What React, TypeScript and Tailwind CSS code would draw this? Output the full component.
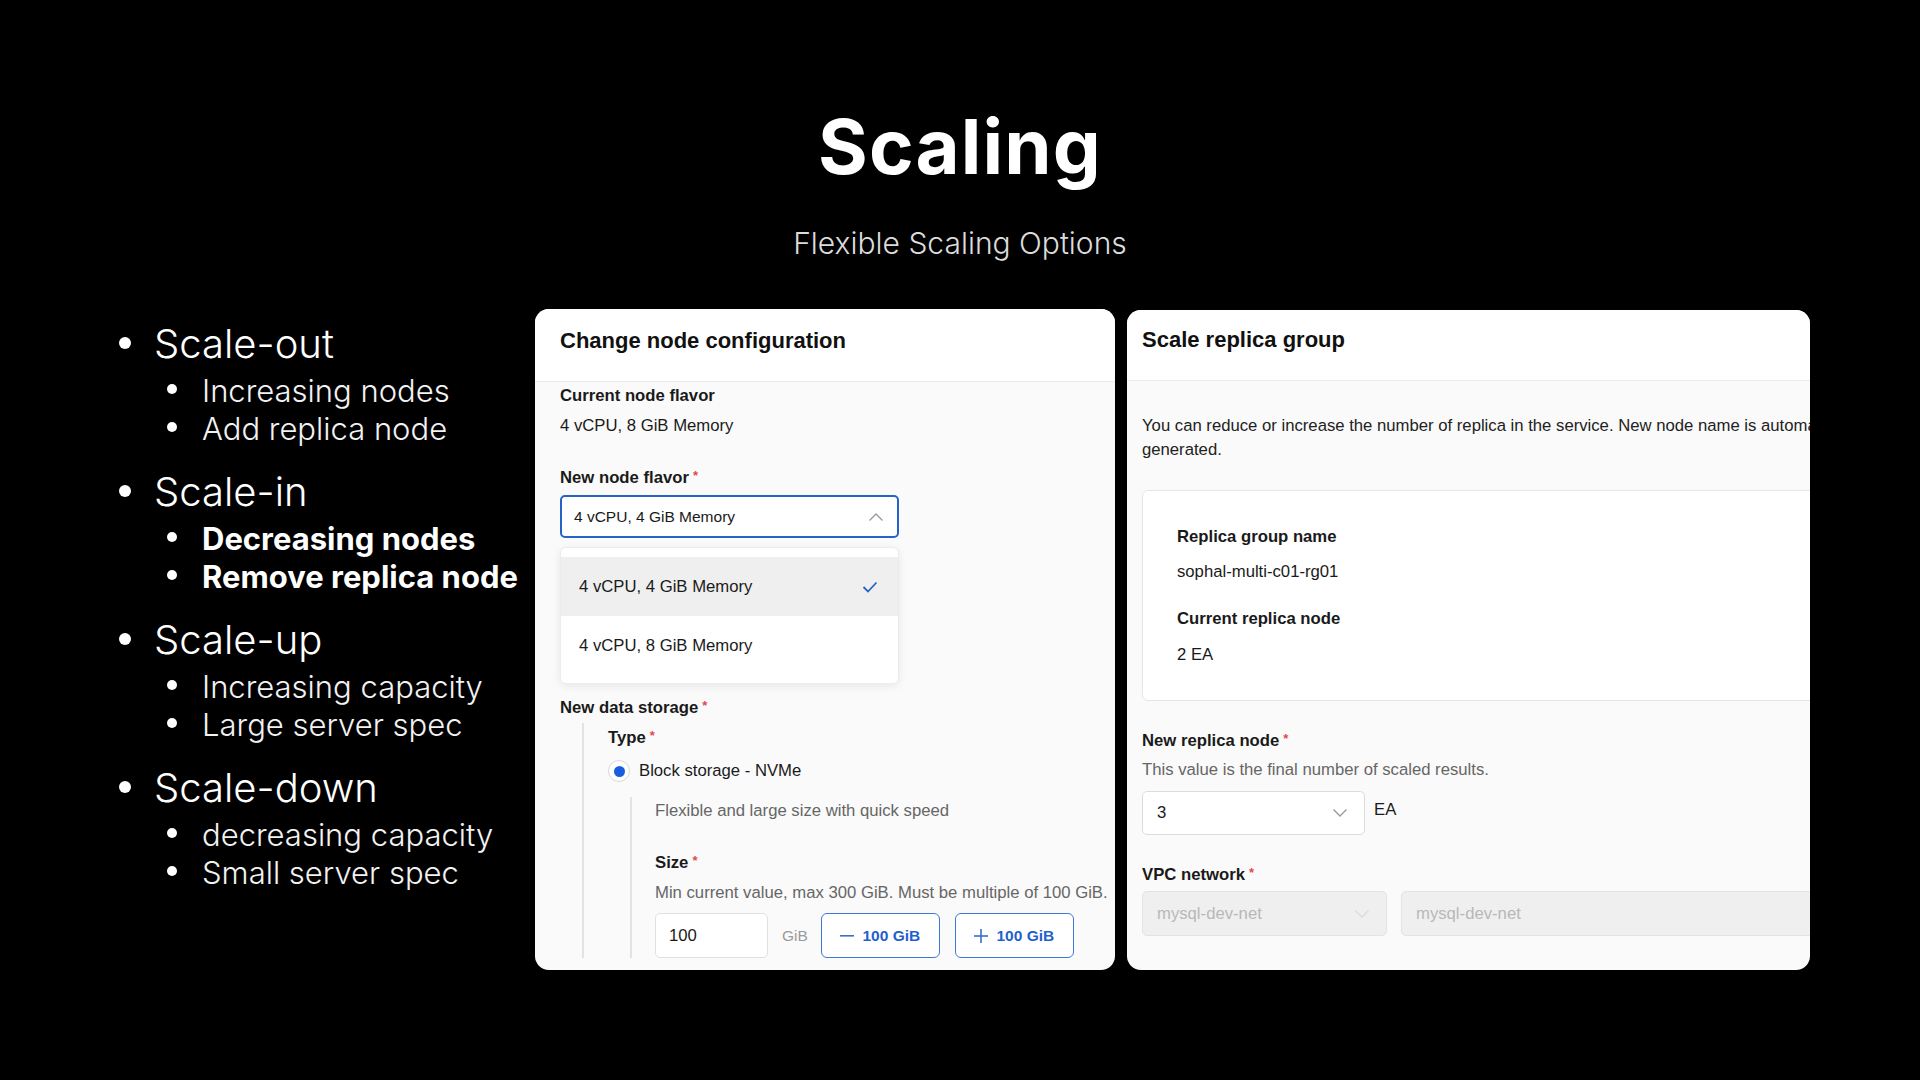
import React from "react";

const Star = () => (
  <span className="text-[#e5484d] text-[13px] leading-none align-top relative top-[1px] ml-[4px]">*</span>
);

const ChevronUp = () => (
  <svg width="16" height="10" viewBox="0 0 16 10" fill="none">
    <polyline points="1.5,8.5 8,2 14.5,8.5" stroke="#9a9a9a" strokeWidth="1.4" />
  </svg>
);

const ChevronDown = ({ color = "#9a9a9a" }: { color?: string }) => (
  <svg width="16" height="10" viewBox="0 0 16 10" fill="none">
    <polyline points="1.5,1.5 8,8 14.5,1.5" stroke={color} strokeWidth="1.4" />
  </svg>
);

const Check = () => (
  <svg width="16" height="12" viewBox="0 0 16 12" fill="none">
    <polyline points="1.5,6 6,10.5 14.5,1.5" stroke="#2b62c8" strokeWidth="1.8" />
  </svg>
);

const Main = ({ children }: { children: React.ReactNode }) => (
  <div className="flex">
    <span className="w-[12px] h-[12px] rounded-full bg-white mt-[17px] shrink-0" />
    <span className="ml-[23px] text-[40px] leading-[48px] text-white font-light">{children}</span>
  </div>
);

const Sub = ({ children, bold }: { children: React.ReactNode; bold?: boolean }) => (
  <li className="flex">
    <span className="w-[10px] h-[10px] rounded-full bg-white mt-[12px] shrink-0" />
    <span
      className={
        "ml-[25px] text-[31px] leading-[38px] " +
        (bold ? "font-bold text-white" : "font-light text-[#f2f2f2]")
      }
    >
      {children}
    </span>
  </li>
);

const Group = ({ title, items, bold }: { title: string; items: string[]; bold?: boolean }) => (
  <li>
    <Main>{title}</Main>
    <ul className="mt-[4px] pl-[48px]">
      {items.map((i) => (
        <Sub key={i} bold={bold}>
          {i}
        </Sub>
      ))}
    </ul>
  </li>
);

export default function App() {
  return (
    <div className="w-[1920px] h-[1080px] bg-black overflow-hidden font-['Inter',sans-serif]">
      <div className="flex flex-col items-center pt-[108px]">
        <h1 className="text-[76px] leading-[76px] font-bold tracking-[0.015em] text-white">Scaling</h1>
        <p className="mt-[41px] text-[30px] leading-[36px] font-light text-[#dcdcdc]">
          Flexible Scaling Options
        </p>
      </div>

      <div className="flex items-start mt-[48px]">
        {/* Bullets */}
        <div className="w-[535px] shrink-0 pl-[119px] pt-[11px]">
          <ul className="flex flex-col gap-[20px]">
            <Group title="Scale-out" items={["Increasing nodes", "Add replica node"]} />
            <Group title="Scale-in" items={["Decreasing nodes", "Remove replica node"]} bold />
            <Group title="Scale-up" items={["Increasing capacity", "Large server spec"]} />
            <Group title="Scale-down" items={["decreasing capacity", "Small server spec"]} />
          </ul>
        </div>

        {/* Left card */}
        <div className="w-[580px] h-[661px] shrink-0 rounded-[14px] overflow-hidden bg-[#fafafa] flex flex-col font-['Liberation_Sans',Arial,sans-serif] text-[#1a1a1a]">
          <div className="h-[73px] shrink-0 bg-white border-b border-[#ebebeb] pl-[25px] pt-[18px]">
            <h2 className="text-[22px] leading-[28px] font-bold text-[#111]">Change node configuration</h2>
          </div>
          <div className="relative flex-1 overflow-hidden pl-[25px] pt-[4px] text-[16.7px] leading-[20px]">
            <div className="font-bold">Current node flavor</div>
            <div className="mt-[10px]">4 vCPU, 8 GiB Memory</div>
            <div className="mt-[32px] font-bold">
              New node flavor
              <Star />
            </div>
            <div className="mt-[7px] w-[339px] h-[43px] bg-white border-2 border-[#2563c9] rounded-[5px] flex items-center justify-between pl-[12px] pr-[13px]">
              <span className="text-[15.5px]">4 vCPU, 4 GiB Memory</span>
              <ChevronUp />
            </div>

            <div className="mt-[160px] font-bold">
              New data storage
              <Star />
            </div>
            <div className="mt-[5px] ml-[22px] border-l-2 border-[#e3e3e3] pl-[24px] pt-[5px]">
              <div className="font-bold">
                Type
                <Star />
              </div>
              <div className="mt-[12px] flex items-center h-[22px]">
                <span className="w-[22px] h-[22px] rounded-full border border-[#d8d8d8] bg-white flex items-center justify-center shrink-0">
                  <span className="w-[11px] h-[11px] rounded-full bg-[#1a5ee0]" />
                </span>
                <span className="ml-[9px]">Block storage - NVMe</span>
              </div>
              <div className="mt-[15px] ml-[22px] border-l-2 border-[#e3e3e3] pl-[23px] pt-[4px]">
                <div className="text-[#666]">Flexible and large size with quick speed</div>
                <div className="mt-[32px] font-bold">
                  Size
                  <Star />
                </div>
                <div className="mt-[10px] text-[#666] whitespace-nowrap">
                  Min current value, max 300 GiB. Must be multiple of 100 GiB.
                </div>
                <div className="mt-[10px] flex items-center">
                  <div className="w-[113px] h-[45px] bg-white border border-[#e0e0e0] rounded-[5px] pl-[13px] flex items-center">
                    100
                  </div>
                  <span className="ml-[14px] text-[#9a9a9a] text-[15.5px]">GiB</span>
                  <button className="ml-[13px] w-[119px] h-[45px] border-[1.5px] border-[#3e77d8] rounded-[6px] bg-white flex items-center justify-center gap-[8px] text-[#1f5fcf] font-bold text-[15.5px]">
                    <svg width="14" height="2" viewBox="0 0 14 2">
                      <rect width="14" height="1.6" fill="#3e6fc8" />
                    </svg>
                    100 GiB
                  </button>
                  <button className="ml-[15px] w-[119px] h-[45px] border-[1.5px] border-[#3e77d8] rounded-[6px] bg-white flex items-center justify-center gap-[8px] text-[#1f5fcf] font-bold text-[15.5px]">
                    <svg width="14" height="14" viewBox="0 0 14 14">
                      <rect y="6.2" width="14" height="1.6" fill="#3e6fc8" />
                      <rect x="6.2" width="1.6" height="14" fill="#3e6fc8" />
                    </svg>
                    100 GiB
                  </button>
                </div>
              </div>
            </div>

            {/* Dropdown overlay */}
            <div className="absolute left-[25px] top-[165px] w-[339px] h-[137px] bg-white rounded-[6px] border border-[#ececec] shadow-[0_2px_8px_rgba(0,0,0,0.08)] pt-[9px]">
              <div className="h-[59px] bg-[#efefef] flex items-center justify-between pl-[18px] pr-[20px]">
                <span>4 vCPU, 4 GiB Memory</span>
                <Check />
              </div>
              <div className="h-[59px] flex items-center pl-[18px]">
                <span>4 vCPU, 8 GiB Memory</span>
              </div>
            </div>
          </div>
        </div>

        {/* Right card */}
        <div className="w-[683px] h-[660px] shrink-0 mt-[1px] ml-[12px] rounded-[14px] overflow-hidden bg-[#fafafa] flex flex-col font-['Liberation_Sans',Arial,sans-serif] text-[#1a1a1a]">
          <div className="h-[71px] shrink-0 bg-white border-b border-[#ebebeb] pl-[15px] pt-[16px]">
            <h2 className="text-[22px] leading-[28px] font-bold text-[#111]">Scale replica group</h2>
          </div>
          <div className="flex-1 pl-[15px] pt-[33px] text-[16.7px] leading-[20px] w-[820px]">
            <p className="w-[790px] leading-[24px] text-[#222]">
              You can reduce or increase the number of replica in the service. New node name is automatically generated.
            </p>
            <div className="mt-[28px] w-[760px] bg-white border border-[#e6e6e6] rounded-[6px] pl-[34px] pt-[36px] pb-[35px]">
              <div className="font-bold">Replica group name</div>
              <div className="mt-[15px]">sophal-multi-c01-rg01</div>
              <div className="mt-[27px] font-bold">Current replica node</div>
              <div className="mt-[16px]">2 EA</div>
            </div>
            <div className="mt-[30px] font-bold">
              New replica node
              <Star />
            </div>
            <div className="mt-[9px] text-[#666]">This value is the final number of scaled results.</div>
            <div className="mt-[11px] flex items-start">
              <div className="w-[223px] h-[44px] bg-white border border-[#dcdcdc] rounded-[5px] flex items-center justify-between pl-[14px] pr-[16px]">
                <span>3</span>
                <ChevronDown />
              </div>
              <span className="ml-[9px] mt-[9px]">EA</span>
            </div>
            <div className="mt-[30px] font-bold">
              VPC network
              <Star />
            </div>
            <div className="mt-[6px] flex gap-[14px]">
              <div className="w-[245px] h-[45px] bg-[#efefef] border border-[#e3e3e3] rounded-[5px] flex items-center justify-between pl-[14px] pr-[16px] text-[#b8b8b8]">
                <span>mysql-dev-net</span>
                <ChevronDown color="#dcdcdc" />
              </div>
              <div className="w-[420px] h-[45px] bg-[#efefef] border border-[#e3e3e3] rounded-[5px] flex items-center pl-[14px] text-[#b8b8b8]">
                <span>mysql-dev-net</span>
              </div>
            </div>
          </div>
        </div>
      </div>
    </div>
  );
}
